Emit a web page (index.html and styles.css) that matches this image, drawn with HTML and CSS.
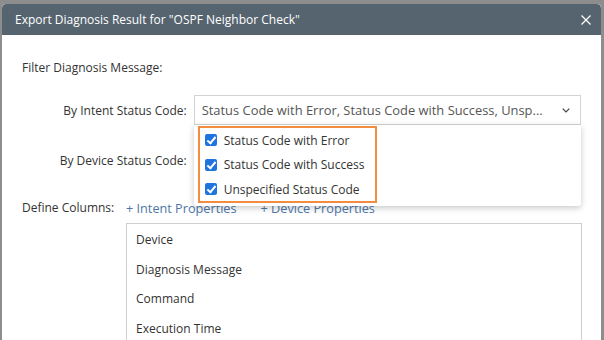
FILE: index.html
```html
<!DOCTYPE html>
<html lang="en">
  <head>
    <meta charset="UTF-8" />
    <title>Export Diagnosis Result</title>
    <link rel="stylesheet" href="styles.css">
  </head>
  <body>
    <div class="dialog">
      <div class="dialog-header">
        <span class="dialog-title">Export Diagnosis Result for "OSPF Neighbor Check"</span>
        <svg class="close-icon" width="10" height="10" viewBox="0 0 10 10">
          <path d="M0.5 0.5 L9.5 9.5 M9.5 0.5 L0.5 9.5" stroke="#fff" stroke-width="1.3" fill="none" />
        </svg>
      </div>
      <div class="dialog-body">
        <div class="section-title">Filter Diagnosis Message:</div>

        <div class="form-row first-row">
          <label class="row-label">By Intent Status Code:</label>
          <div class="select-wrap">
            <div class="select-box">
              <span class="select-text">Status Code with Error, Status Code with Success, Unsp...</span>
              <svg class="chevron" width="8" height="5" viewBox="0 0 8 5">
                <path d="M0.7 0.7 L4 4 L7.3 0.7" stroke="#444" stroke-width="1.2" fill="none" />
              </svg>
            </div>
            <div class="dropdown">
              <div class="highlight">
                <div class="option"><span class="check"></span>Status Code with Error</div>
                <div class="option"><span class="check"></span>Status Code with Success</div>
                <div class="option"><span class="check"></span>Unspecified Status Code</div>
              </div>
            </div>
          </div>
        </div>

        <div class="form-row">
          <label class="row-label">By Device Status Code:</label>
          <div class="select-wrap">
            <div class="select-box"></div>
          </div>
        </div>

        <div class="columns-row">
          <span class="columns-label">Define Columns:</span>
          <a class="link">+ Intent Properties</a>
          <a class="link">+ Device Properties</a>
        </div>

        <ul class="column-list">
          <li>Device</li>
          <li>Diagnosis Message</li>
          <li>Command</li>
          <li>Execution Time</li>
        </ul>
      </div>
    </div>
  </body>
</html>
```

FILE: styles.css
```css
body {
  margin: 0;
  padding: 4px 3px 0 2px;
  background: #8d8d8d;
  font-family: "Open Sans", "Segoe UI", sans-serif;
  font-size: 12px;
  color: #333;
  height: 340px;
  box-sizing: border-box;
  overflow: hidden;
}
.dialog {
  background: #fff;
  border-radius: 4px 4px 0 0;
  height: 100%;
  overflow: hidden;
}
.dialog-header {
  height: 31px;
  background: #56646f;
  border-radius: 4px 4px 0 0;
  display: flex;
  align-items: center;
  justify-content: space-between;
  padding: 0 10px 0 13px;
}
.dialog-title {
  color: #fff;
  font-size: 12px;
}
.close-icon {
  display: block;
}
.dialog-body {
  padding: 24px 20px 0 20px;
}
.section-title {
  line-height: 18px;
}
.form-row {
  display: flex;
  align-items: center;
}
.first-row {
  margin-top: 18px;
}
.form-row + .form-row {
  margin-top: 20px;
}
.row-label {
  width: 172px;
  text-align: right;
  padding-right: 7px;
  box-sizing: border-box;
}
.select-wrap {
  position: relative;
  width: 388px;
}
.select-box {
  height: 30px;
  border: 1px solid #d3d3d3;
  box-sizing: border-box;
  display: flex;
  align-items: center;
  justify-content: space-between;
  padding: 0 10px 0 7px;
  color: #555;
  font-size: 12.9px;
}
.chevron {
  display: block;
}
.dropdown {
  position: absolute;
  top: 30px;
  left: 0;
  width: 387px;
  height: 81px;
  background: #fff;
  border-radius: 0 0 3px 3px;
  box-shadow: 0 2px 6px rgba(0, 0, 0, 0.22);
  z-index: 2;
  padding: 1px 0 0 4px;
  box-sizing: border-box;
}
.highlight {
  width: 179px;
  height: 77px;
  border: 2px solid #f28c40;
  box-sizing: border-box;
}
.option {
  display: flex;
  align-items: center;
  height: 24.5px;
  padding-left: 5px;
  color: #333;
}
.check {
  width: 12px;
  height: 12px;
  border-radius: 2px;
  background: #1f74e0;
  margin-right: 7px;
  position: relative;
}
.check::after {
  content: "";
  position: absolute;
  left: 4px;
  top: 1px;
  width: 3px;
  height: 7px;
  border: solid #fff;
  border-width: 0 2px 2px 0;
  transform: rotate(40deg);
}
.columns-row {
  display: flex;
  align-items: center;
  margin-top: 24px;
  line-height: 18px;
}
.columns-label {
  width: 104px;
}
.link {
  color: #4e77a8;
  font-size: 12.7px;
  margin-right: 24px;
}
.column-list {
  list-style: none;
  margin: 6px 0 0 104px;
  padding: 1px 9px;
  border: 1px solid #cfcfcf;
  width: 456px;
  height: 130px;
  box-sizing: border-box;
}
.column-list li {
  line-height: 29.6px;
}
```
